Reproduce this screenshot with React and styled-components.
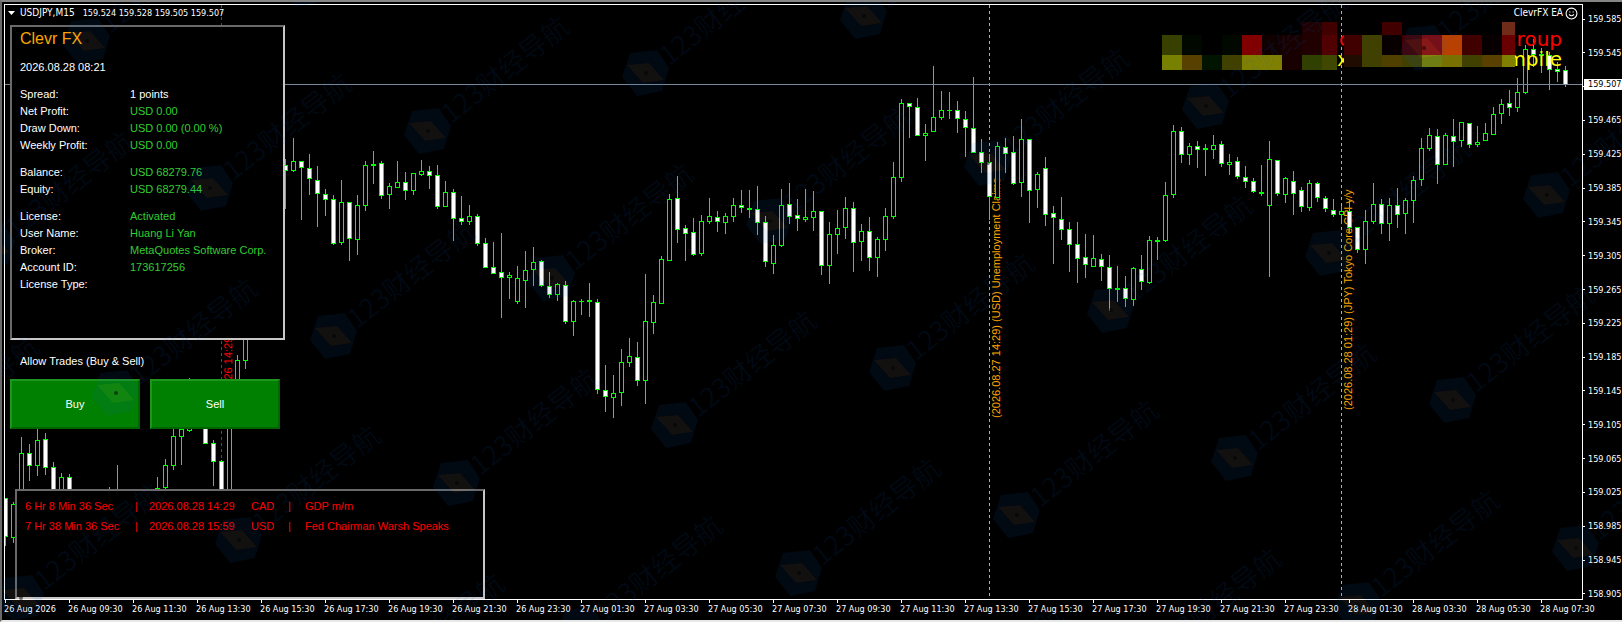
import React from "react";
import styled, { createGlobalStyle } from "styled-components";
import { Smile } from "lucide-react";

const GlobalStyle = createGlobalStyle`
  *, *::before, *::after { box-sizing: border-box; }
  body {
    margin: 0;
    background: #000;
    color: #fff;
    font-family: "Liberation Sans", Arial, sans-serif;
    font-size: 11px;
  }
`;

const axisFont = `"DejaVu Sans Condensed", "DejaVu Sans", Tahoma, sans-serif`;

/* ---------- data ---------- */

// One entry per bar: wick top, body top, body bottom, wick bottom, kind
// (u = rising hollow bar, d = falling filled bar, x = open equals close).
const bars = `
498,498,537,546,d 502,504,538,543,u 437,453,500,505,u 444,453,466,481,d 420,440,466,476,u
433,439,468,475,d 462,467,500,505,d 473,477,500,505,u 474,477,500,505,d 492,495,510,515,d
495,500,515,520,d 498,503,515,520,u 500,505,515,520,d 487,495,510,515,u 465,495,510,515,u
495,500,515,520,d 495,500,515,520,u 492,498,510,515,d 492,498,510,515,u 477,488,500,505,u
459,465,488,495,u 425,436,466,470,u 425,429,437,465,u 378,400,431,432,u 390,400,420,425,d
410,420,444,444,d 440,443,462,486,d 460,461,500,505,d 385,400,500,505,u 355,360,410,415,u
290,300,361,369,u 230,240,300,310,u 200,210,240,250,u 180,190,215,220,u 160,165,190,200,u
159,165,171,209,d 138,161,171,172,u 161,161,168,220,d 154,168,179,195,d 166,180,194,227,d
189,194,200,216,d 195,199,244,245,d 180,202,243,245,u 202,202,239,261,d 195,205,240,255,u
161,165,206,211,u 151,164,166,184,x 161,163,196,199,d 183,186,195,209,u 161,182,188,188,u
172,182,191,200,d 173,173,191,195,u 160,171,175,176,u 166,171,176,189,d 165,175,207,209,d
181,192,207,207,u 189,192,219,241,d 196,218,222,225,d 205,216,222,225,u 214,216,244,246,d
238,243,268,268,d 242,267,274,274,d 233,272,278,318,d 272,275,278,299,u 266,278,302,304,u
251,270,281,308,u 247,262,270,286,u 260,261,286,287,d 272,286,295,298,d 283,284,295,301,u
281,285,322,324,d 300,301,322,336,u 299,301,302,315,x 283,300,302,317,x 299,302,390,394,d
365,390,397,412,d 375,393,398,418,u 349,362,393,406,u 338,356,363,367,u 342,357,381,386,d
274,321,381,404,u 295,302,323,334,u 256,259,304,304,u 194,199,261,261,u 176,198,230,243,d
225,228,234,261,d 218,232,255,256,d 215,221,254,256,u 198,216,222,224,u 211,217,222,232,d
213,216,223,234,u 198,205,217,222,u 190,205,208,213,d 190,208,210,218,x 186,209,223,235,d
216,222,262,267,d 235,245,264,274,u 189,205,246,247,u 183,204,217,224,d 199,215,219,231,d
189,217,220,222,u 191,211,218,231,u 211,211,266,275,d 222,234,266,284,u 210,228,235,254,u
197,208,228,239,u 202,208,243,272,d 224,231,242,261,u 217,231,258,271,d 237,239,258,277,u
208,216,240,251,u 162,177,217,219,u 99,103,178,182,u 103,103,107,138,d 98,107,136,136,d
124,133,136,161,u 66,117,132,132,u 91,110,118,120,u 92,110,111,119,x 101,110,119,133,d
111,119,128,157,d 77,128,153,153,d 139,152,163,173,d 154,162,197,220,d 142,146,198,198,u
138,147,154,173,d 136,152,184,185,d 119,139,183,197,u 139,139,191,223,d 172,174,190,208,u
157,168,215,226,d 206,213,218,264,d 197,219,230,240,d 222,229,245,272,d 222,244,259,283,d
234,257,265,278,d 235,258,267,267,u 254,259,267,281,d 255,267,289,311,d 266,288,290,302,x
276,288,299,307,d 267,268,300,306,u 255,269,282,290,d 236,240,283,284,u 237,240,242,260,x
182,195,241,242,u 125,131,195,198,u 127,131,155,163,d 143,146,155,165,u 141,146,150,168,d
144,148,150,176,x 135,145,150,159,u 141,144,164,167,d 154,162,165,175,u 157,161,177,179,d
166,177,182,188,d 178,181,192,193,d 165,192,194,196,x 141,159,206,277,u 160,160,194,196,d
177,178,195,203,u 171,181,194,215,d 187,190,207,212,d 180,183,208,211,u 182,183,198,202,d
196,198,209,212,d 199,210,215,217,d 206,211,215,224,u 200,211,228,234,d 227,227,250,253,d
210,221,250,264,u 183,204,222,224,u 199,204,224,234,d 198,205,224,241,u 188,205,215,228,d
198,200,214,234,u 176,180,201,223,u 138,148,180,186,u 128,135,149,151,u 129,136,165,184,d
133,135,165,165,u 119,136,142,167,d 122,122,141,147,u 123,123,145,148,d 126,142,145,147,u
123,133,141,141,u 107,114,135,135,u 99,104,114,124,u 90,103,108,116,d 78,92,108,112,u
45,49,93,94,u 39,49,55,67,d 48,54,56,73,x 52,55,70,90,d 62,69,72,82,d
66,70,85,87,d
`
  .trim()
  .split(/\s+/)
  .map((entry) => {
    const [high, top, bottom, low, kind] = entry.split(",");
    return { high: +high, top: +top, bottom: +bottom, low: +low, kind };
  });

const eventLines = [
  { x: 221, y: 426, color: "#f00", text: "(2026.08.26 14:29) (USD)" },
  { x: 989, y: 418, color: "#ffa500", text: "(2026.08.27 14:29) (USD) Unemployment Claims" },
  { x: 1341, y: 410, color: "#ffa500", text: "(2026.08.28 01:29) (JPY) Tokyo Core CPI y/y" },
];

// Pixelated blocks: x, y, width, height, colour.
const mosaic = [
  [1302, 22, 20, 13, "#200000"], [1322, 22, 15, 13, "#400000"],
  [1382, 22, 20, 13, "#400000"], [1502, 22, 13, 13, "#702c18"],
  [1162, 35, 20, 20, "#384000"], [1182, 35, 20, 20, "#000800"],
  [1202, 35, 20, 20, "#000"], [1222, 35, 20, 20, "#000800"],
  [1242, 35, 20, 20, "#800000"], [1262, 35, 20, 20, "#100000"],
  [1282, 35, 20, 20, "#180000"], [1302, 35, 20, 20, "#200000"],
  [1322, 35, 15, 20, "#500000"], [1344, 35, 18, 20, "#400000"],
  [1362, 35, 20, 20, "#404000"], [1382, 35, 20, 20, "#080000"],
  [1402, 35, 20, 20, "#400000"], [1422, 35, 20, 20, "#800808"],
  [1442, 35, 20, 20, "#b84000"], [1462, 35, 20, 20, "#400000"],
  [1482, 35, 20, 20, "#080000"], [1502, 35, 13, 20, "#680000"],
  [1162, 55, 20, 15, "#788000"], [1182, 55, 20, 15, "#584000"],
  [1202, 55, 20, 15, "#001400"], [1222, 55, 20, 15, "#404000"],
  [1242, 55, 40, 15, "#808000"], [1282, 55, 20, 15, "#180000"],
  [1302, 55, 20, 15, "#304000"], [1322, 55, 15, 15, "#404800"],
  [1344, 55, 18, 12, "#200c00"], [1362, 55, 20, 12, "#404000"],
  [1382, 55, 20, 12, "#504000"], [1402, 55, 20, 12, "#404000"],
  [1422, 55, 20, 12, "#788000"], [1442, 55, 20, 12, "#787000"],
  [1462, 55, 20, 12, "#404000"], [1482, 55, 20, 12, "#584000"],
  [1502, 55, 13, 12, "#808000"],
];

const prices = Array.from({ length: 18 }, (_, i) => (159.585 - i * 0.04).toFixed(3));

const times = Array.from({ length: 25 }, (_, i) => {
  if (i === 0) return "26 Aug 2026";
  const hour = 7 + i * 2;
  return `${26 + Math.floor(hour / 24)} Aug ${String(hour % 24).padStart(2, "0")}:30`;
});

const account = [
  [
    ["Spread:", "1 points", true],
    ["Net Profit:", "USD 0.00"],
    ["Draw Down:", "USD 0.00 (0.00 %)"],
    ["Weekly Profit:", "USD 0.00"],
  ],
  [
    ["Balance:", "USD 68279.76"],
    ["Equity:", "USD 68279.44"],
  ],
  [
    ["License:", "Activated"],
    ["User Name:", "Huang Li Yan"],
    ["Broker:", "MetaQuotes Software Corp."],
    ["Account ID:", "173617256"],
    ["License Type:", ""],
  ],
];

const news = [
  ["6 Hr 8 Min 36 Sec", "2026.08.28 14:29", "CAD", "GDP m/m"],
  ["7 Hr 38 Min 36 Sec", "2026.08.28 15:59", "USD", "Fed Chairman Warsh Speaks"],
];

/* ---------- styles ---------- */

const Window = styled.main`
  position: relative;
  display: grid;
  grid-template-columns: minmax(0, 1fr) 39px;
  grid-template-rows: minmax(594px, 1fr) 20px;
  min-height: 100vh;
  padding: 2px 0 0 2px;
  border: 2px solid #696969;
  border-top-color: #858585;
  border-bottom-color: #e8e8e8;
  border-right: 0;
  overflow: hidden;
`;

const Plot = styled.section`
  display: grid;
  border: 1px solid #fff;
  overflow: hidden;
  & > * { grid-area: 1 / 1; }
`;

const ChartSvg = styled.svg`
  display: block;
  width: 100%;
  height: 100%;
  font-family: "Liberation Sans", Arial, sans-serif;
  font-size: 11px;
`;

const Overlay = styled.div`
  position: relative;
  display: flex;
  flex-direction: column;
  align-items: flex-start;
`;

const ChartHeader = styled.header`
  display: flex;
  align-items: center;
  width: 100%;
  height: 16px;
  margin-bottom: 4px;
  padding: 0 4px 0 3px;
  font: 10px/16px ${axisFont};
`;

const Caret = styled.span`
  width: 7px;
  height: 4px;
  margin-right: 5px;
  background: #fff;
  clip-path: polygon(0 0, 100% 0, 50% 100%);
`;

const Quotes = styled.span`
  margin-left: 8px;
  font-size: 9px;
`;

const ExpertName = styled.span`
  display: flex;
  align-items: center;
  gap: 2px;
  margin-left: auto;
`;

const Panel = styled.section`
  border: 2px solid;
  border-color: #696969 #c8c8c8 #c8c8c8 #696969;
  background: #000;
`;

const AccountPanel = styled(Panel)`
  width: 275px;
  height: 315px;
  margin-left: 5px;
  padding-left: 8px;
  line-height: 17px;
`;

const PanelTitle = styled.h1`
  margin: 0 0 8px;
  color: #ffa500;
  font-size: 16px;
  font-weight: 400;
  line-height: 24px;
`;

const ServerTime = styled.time`
  display: block;
`;

const Facts = styled.dl`
  display: grid;
  grid-template-columns: 110px 1fr;
  grid-auto-rows: 17px;
  margin: 10px 0 0;
`;

const Term = styled.dt``;

const Value = styled.dd`
  margin: 0;
  color: ${(p) => (p.$plain ? "#fff" : "#32cd32")};
`;

const TradeCaption = styled.p`
  margin: 13px 0 9px 15px;
  line-height: 17px;
`;

const TradeButtons = styled.div`
  display: flex;
  gap: 10px;
  margin-left: 5px;
`;

const TradeButton = styled.button`
  width: 130px;
  height: 50px;
  padding: 0;
  border: 2px solid;
  border-color: #1e961e #006400 #006400 #1e961e;
  background: #008000;
  color: #fff;
  font: inherit;
`;

const NewsPanel = styled(Panel)`
  width: 470px;
  height: 110px;
  margin: auto 0 0 10px;
  padding: 5px 0 0 8px;
`;

const NewsTable = styled.table`
  width: 100%;
  table-layout: fixed;
  border-collapse: collapse;
  color: #f00;
`;

const NewsCell = styled.td`
  height: 20px;
  padding: 0;
  white-space: nowrap;
`;

const PriceAxis = styled.aside`
  position: relative;
  font: 9px/12px ${axisFont};
`;

const PriceList = styled.ol`
  display: flex;
  flex-direction: column;
  justify-content: space-between;
  height: 100%;
  margin: 0;
  padding: 9px 0 0;
  list-style: none;
`;

const PriceTick = styled.li`
  display: flex;
  align-items: center;
  gap: 3px;
  height: 12px;
  &::before {
    content: "";
    width: 2px;
    height: 1px;
    background: #fff;
  }
`;

const CurrentPrice = styled.output`
  position: absolute;
  top: 75px;
  left: 1px;
  right: 0;
  padding-left: 4px;
  background: #fff;
  color: #000;
  line-height: 11px;
`;

const TimeAxis = styled.ol`
  grid-column: 1 / -1;
  display: flex;
  margin: 0;
  padding: 0;
  list-style: none;
  font: 9px/12px ${axisFont};
`;

const TimeTick = styled.li`
  flex: 0 0 64px;
  white-space: nowrap;
  &::before {
    content: "";
    display: block;
    width: 1px;
    height: 3px;
    margin-left: 1px;
    background: #fff;
  }
`;

const WatermarkSvg = styled.svg`
  position: absolute;
  inset: 0;
  width: 100%;
  height: 100%;
  pointer-events: none;
  font: 27px "Noto Sans CJK SC", sans-serif;
`;

/* ---------- parts ---------- */

function Bar({ x, high, top, bottom, low, kind }) {
  return (
    <g fill="#0f0">
      <rect x={x} y={high} width={1} height={low - high} />
      <rect x={x - 2} y={top} width={5} height={bottom - top} />
      {kind !== "x" && (
        <rect
          x={x - 1}
          y={top + 1}
          width={3}
          height={Math.max(bottom - top - 2, 0)}
          fill={kind === "d" ? "#fff" : "#000"}
        />
      )}
    </g>
  );
}

function Chart() {
  return (
    <ChartSvg role="img" aria-label="USDJPY M15 candlestick chart">
      <g transform="translate(-5 -5)">
        {eventLines.map((e) => (
          <g key={e.x} fill={e.color}>
            <line x1={e.x + 0.5} x2={e.x + 0.5} y1={5} y2="110%" stroke={e.color} strokeDasharray="3 3" />
            <text transform={`translate(${e.x + 11} ${e.y}) rotate(-90)`}>{e.text}</text>
          </g>
        ))}
        <g shapeRendering="crispEdges">
          {bars.map((bar, i) => (
            <Bar key={i} x={5 + i * 8} {...bar} />
          ))}
          <rect x={5} y={84} width="100%" height={1} fill="#778899" />
        </g>
        <g fontFamily="DejaVu Sans" fontSize="20">
          <text x={1339} y={46} fill="#f00">c</text>
          <text x={1337} y={66} fill="#ff0">x</text>
          <text x={1562} y={46} fill="#f00" textAnchor="end">roup</text>
          <text x={1562} y={66} fill="#ff0" textAnchor="end">mpile</text>
        </g>
        <g shapeRendering="crispEdges">
          {mosaic.map(([x, y, w, h, fill]) => (
            <rect key={`${x}-${y}`} x={x} y={y} width={w} height={h} fill={fill} />
          ))}
        </g>
      </g>
    </ChartSvg>
  );
}

function Watermark() {
  const marks = [];
  for (let a = -8; a <= 8; a++) {
    for (let b = -4; b <= 10; b++) {
      const x = Math.round(85 + a * 123.4 + b * 218);
      const y = Math.round(39 + a * 147.3 - b * 57.5);
      if (x > -160 && x < 1660 && y > -40 && y < 740) marks.push([x, y]);
    }
  }
  return (
    <WatermarkSvg aria-hidden="true">
      {marks.map(([x, y]) => (
        <g key={`${x},${y}`} transform={`translate(${x} ${y})`} fill="#0864d8" fillOpacity="0.09">
          <path d="M-16-20 11-23 23-5 16 18-9 23-24 4Z M-19-8-3 10 18 7 3-10Z" fillRule="evenodd" />
          <path d="M-19-8 3-10 18 7-3 10Z" fill="#c8c0b4" />
          <circle r="2" fill="#000" fillOpacity="0.5" />
          <text transform="rotate(-38)" x="22" y="9">123财经导航</text>
        </g>
      ))}
    </WatermarkSvg>
  );
}

export default function App() {
  return (
    <>
      <GlobalStyle />
      <Window>
        <Plot>
          <Chart />
          <Overlay>
            <ChartHeader>
              <Caret />
              <span>USDJPY,M15</span>
              <Quotes>159.524 159.528 159.505 159.507</Quotes>
              <ExpertName>
                ClevrFX EA
                <Smile size={13} strokeWidth={2} />
              </ExpertName>
            </ChartHeader>

            <AccountPanel>
              <PanelTitle>Clevr FX</PanelTitle>
              <ServerTime>2026.08.28 08:21</ServerTime>
              {account.map((group, i) => (
                <Facts key={i}>
                  {group.map(([term, value, plain]) => (
                    <React.Fragment key={term}>
                      <Term>{term}</Term>
                      <Value $plain={plain}>{value}</Value>
                    </React.Fragment>
                  ))}
                </Facts>
              ))}
            </AccountPanel>

            <TradeCaption>Allow Trades (Buy &amp; Sell)</TradeCaption>
            <TradeButtons>
              <TradeButton type="button">Buy</TradeButton>
              <TradeButton type="button">Sell</TradeButton>
            </TradeButtons>

            <NewsPanel>
              <NewsTable>
                <colgroup>
                  <col width="110" />
                  <col width="14" />
                  <col width="102" />
                  <col width="37" />
                  <col width="17" />
                  <col />
                </colgroup>
                <tbody>
                  {news.map(([left, at, currency, title]) => (
                    <tr key={at}>
                      <NewsCell>{left}</NewsCell>
                      <NewsCell>|</NewsCell>
                      <NewsCell>{at}</NewsCell>
                      <NewsCell>{currency}</NewsCell>
                      <NewsCell>|</NewsCell>
                      <NewsCell>{title}</NewsCell>
                    </tr>
                  ))}
                </tbody>
              </NewsTable>
            </NewsPanel>
          </Overlay>
        </Plot>

        <PriceAxis>
          <PriceList>
            {prices.map((price) => (
              <PriceTick key={price}>{price === "159.505" ? null : price}</PriceTick>
            ))}
          </PriceList>
          <CurrentPrice>159.507</CurrentPrice>
        </PriceAxis>

        <TimeAxis>
          {times.map((time) => (
            <TimeTick key={time}>{time}</TimeTick>
          ))}
        </TimeAxis>
        <Watermark />
      </Window>
    </>
  );
}
